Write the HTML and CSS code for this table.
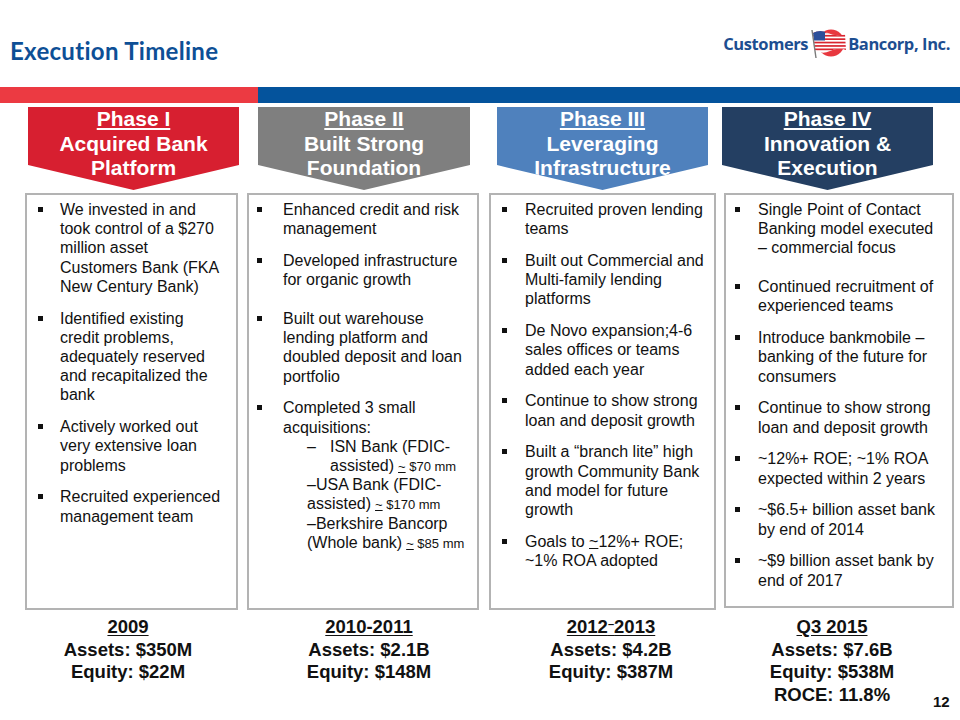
FILE: index.html
```html
<!DOCTYPE html>
<html lang="en">
<head>
<meta charset="utf-8">
<title>Execution Timeline</title>
<link rel="stylesheet" href="styles.css">
</head>
<body>
<div class="slide">
  <header class="top">
    <h1 class="title">Execution Timeline</h1>
    <div class="logo">
      <span class="logo-word">Customers</span>
      <svg class="flag" width="42" height="32" viewBox="0 0 42 32" aria-hidden="true">
        <defs>
          <clipPath id="flagclip">
            <path d="M6 6 Q13 2 21 6 T38 7 L39 23 Q31 20 23 24 T8 23 Z"/>
          </clipPath>
        </defs>
        <circle cx="24" cy="16" r="13.5" fill="#e8383f"/>
        <g clip-path="url(#flagclip)">
          <rect x="0" y="0" width="42" height="32" fill="#ffffff"/>
          <rect x="0" y="4.5" width="42" height="1.7" fill="#d9252f"/>
          <rect x="0" y="7.9" width="42" height="1.7" fill="#d9252f"/>
          <rect x="0" y="11.3" width="42" height="1.7" fill="#d9252f"/>
          <rect x="0" y="14.7" width="42" height="1.7" fill="#d9252f"/>
          <rect x="0" y="18.1" width="42" height="1.7" fill="#d9252f"/>
          <rect x="0" y="21.5" width="42" height="1.7" fill="#d9252f"/>
          <rect x="0" y="1" width="18" height="12.5" fill="#2c4f9a"/>
        </g>
        <line x1="5" y1="3" x2="9" y2="31" stroke="#7a7a7a" stroke-width="1.4"/>
      </svg>
      <span class="logo-word">Bancorp, Inc.</span>
    </div>
  </header>

  <div class="bar"><div class="bar-red"></div><div class="bar-blue"></div></div>

  <div class="phases">
    <div class="chev chev1"><u>Phase I</u><br>Acquired Bank<br>Platform</div>
    <div class="chev chev2"><u>Phase II</u><br>Built Strong<br>Foundation</div>
    <div class="chev chev3"><u>Phase III</u><br>Leveraging<br>Infrastructure</div>
    <div class="chev chev4"><u>Phase IV</u><br>Innovation &amp;<br>Execution</div>
  </div>

  <div class="boxes">
    <div class="box box1">
      <ul>
        <li>We invested in and took control of a $270 million asset Customers Bank (FKA New Century Bank)</li>
        <li>Identified existing credit problems, adequately reserved and recapitalized the bank</li>
        <li>Actively worked out very extensive loan problems</li>
        <li>Recruited experienced management team</li>
      </ul>
    </div>
    <div class="box box2">
      <ul>
        <li>Enhanced credit and risk management</li>
        <li>Developed infrastructure for organic growth</li>
        <li class="more">Built out warehouse lending platform and doubled deposit and loan portfolio</li>
        <li>Completed 3 small acquisitions:
          <div class="sub sub-first"><span class="dash">–</span>ISN Bank (FDIC-assisted)<span class="amt">~ $70 mm</span></div>
          <div class="sub">–USA Bank (FDIC-assisted)<span class="amt">~ $170 mm</span></div>
          <div class="sub">–Berkshire Bancorp (Whole bank)<span class="amt">~ $85 mm</span></div>
        </li>
      </ul>
    </div>
    <div class="box box3">
      <ul>
        <li>Recruited proven lending teams</li>
        <li>Built out Commercial and Multi-family lending platforms</li>
        <li>De Novo expansion;4-6 sales offices or teams added each year</li>
        <li>Continue to show strong loan and deposit growth</li>
        <li>Built a “branch lite” high growth Community Bank and model for future growth</li>
        <li>Goals to <u>~</u>12%+ ROE; ~1% ROA adopted</li>
      </ul>
    </div>
    <div class="box box4">
      <ul>
        <li>Single Point of Contact Banking model executed – commercial focus</li>
        <li class="more">Continued recruitment of experienced teams</li>
        <li>Introduce bankmobile – banking of the future for consumers</li>
        <li>Continue to show strong loan and deposit growth</li>
        <li>~12%+ ROE; ~1% ROA expected within 2 years</li>
        <li>~$6.5+ billion asset bank by end of 2014</li>
        <li>~$9 billion asset bank by end of 2017</li>
      </ul>
    </div>
  </div>

  <div class="stats">
    <div class="stat stat1"><u>2009</u><br>Assets: $350M<br>Equity: $22M</div>
    <div class="stat stat2"><u>2010-2011</u><br>Assets: $2.1B<br>Equity: $148M</div>
    <div class="stat stat3"><u>2012<span class="updash">–</span>2013</u><br>Assets: $4.2B<br>Equity: $387M</div>
    <div class="stat stat4"><u>Q3 2015</u><br>Assets: $7.6B<br>Equity: $538M<br>ROCE: 11.8%</div>
    <div class="pagenum">12</div>
  </div>
</div>
</body>
</html>
```

FILE: styles.css
```css
html, body {
  margin: 0;
  padding: 0;
  background: #ffffff;
}

.slide {
  width: 960px;
  height: 720px;
  overflow: hidden;
  font-family: "Liberation Sans", Arial, sans-serif;
  color: #111111;
}

/* header */
.top {
  display: flex;
  justify-content: space-between;
  align-items: flex-start;
  height: 87px;
}

.title {
  margin: 37px 0 0 10px;
  font-family: Lato, "Open Sans", sans-serif;
  font-variant-ligatures: none;
  font-weight: 700;
  font-size: 24px;
  line-height: 28px;
  letter-spacing: 0.3px;
  color: #0d4f96;
}

.logo {
  display: flex;
  align-items: center;
  height: 32px;
  margin: 27px 10px 0 0;
  font-family: "Open Sans", "Liberation Sans", sans-serif;
  font-weight: 700;
  font-size: 16.5px;
  letter-spacing: -0.4px;
  color: #1d4e91;
}

.flag {
  display: block;
  margin: 0 -1px 0 -1px;
}

/* color bar */
.bar {
  display: flex;
  height: 16px;
}

.bar-red {
  width: 258px;
  background: #ec3a42;
}

.bar-blue {
  flex: 1;
  background: #04539c;
}

/* chevrons */
.phases {
  display: flex;
  margin-top: 4px;
  padding-left: 28px;
}

.chev {
  width: 211px;
  height: 83px;
  clip-path: polygon(0 0, 100% 0, 100% 70%, 50% 100%, 0 70%);
  color: #ffffff;
  font-weight: 700;
  font-size: 21px;
  line-height: 24.5px;
  text-align: center;
}

.chev u {
  text-decoration-thickness: 2px;
  text-underline-offset: 2px;
}

.chev1 { background: #d71f30; }
.chev2 { background: #7f7f7f; margin-left: 19px; width: 212px; }
.chev3 { background: #4f81bd; margin-left: 27px; }
.chev4 { background: #243f62; margin-left: 14px; }

/* boxes */
.boxes {
  display: flex;
  align-items: flex-start;
  margin-top: 3px;
  padding-left: 25px;
}

.box {
  box-sizing: border-box;
  height: 417px;
  border: 2px solid #b3b3b3;
  padding-top: 5px;
}

.box ul {
  list-style: none;
  margin: 0;
  padding: 0;
}

.box li {
  position: relative;
  font-size: 16px;
  line-height: 19.2px;
  margin: 0 0 12.6px 0;
}

.box li::before {
  content: "";
  position: absolute;
  top: 7px;
  left: -23px;
  width: 5px;
  height: 5px;
  background: #111111;
}

.box li.more {
  margin-top: 19.5px;
}

.box1 { width: 213px; padding-left: 33px; padding-right: 14px; }
.box2 { width: 232px; margin-left: 9px; padding-left: 34px; padding-right: 8px; }
.box3 { width: 227px; margin-left: 10px; padding-left: 34px; padding-right: 4px; }
.box4 { width: 230px; margin-left: 8px; padding-left: 32px; padding-right: 12px; height: 415px; }

.box1 li::before { left: -22px; }
.box2 li::before { left: -26px; }
.box3 li::before { left: -23px; }
.box4 li::before { left: -23px; }

.sub {
  font-size: 16px;
  line-height: 19.2px;
  padding-left: 24px;
}

.sub-first {
  padding-left: 47px;
  text-indent: -23px;
}

.dash {
  display: inline-block;
  width: 23px;
  text-indent: 0;
}

.amt {
  display: inline-block;
  margin-left: 4px;
  font-size: 13px;
  line-height: 16px;
  text-indent: 0;
}

.amt::first-letter {
  text-decoration: underline;
}

/* stats */
.stats {
  display: flex;
  align-items: flex-start;
  margin-top: 6px;
  padding-left: 28px;
}

.stat {
  width: 200px;
  text-align: center;
  font-weight: 700;
  font-size: 18.5px;
  line-height: 22.5px;
  color: #111111;
}

.stat u {
  text-underline-offset: 2px;
}

.stat2 { margin-left: 41px; }
.stat3 { margin-left: 42px; }
.stat4 { margin-left: 21px; }

.updash {
  font-size: 0.6em;
  line-height: 0;
  vertical-align: 0.45em;
}

.pagenum {
  margin: 77px 0 0 1px;
  font-weight: 700;
  font-size: 15px;
  line-height: 18px;
}
```
